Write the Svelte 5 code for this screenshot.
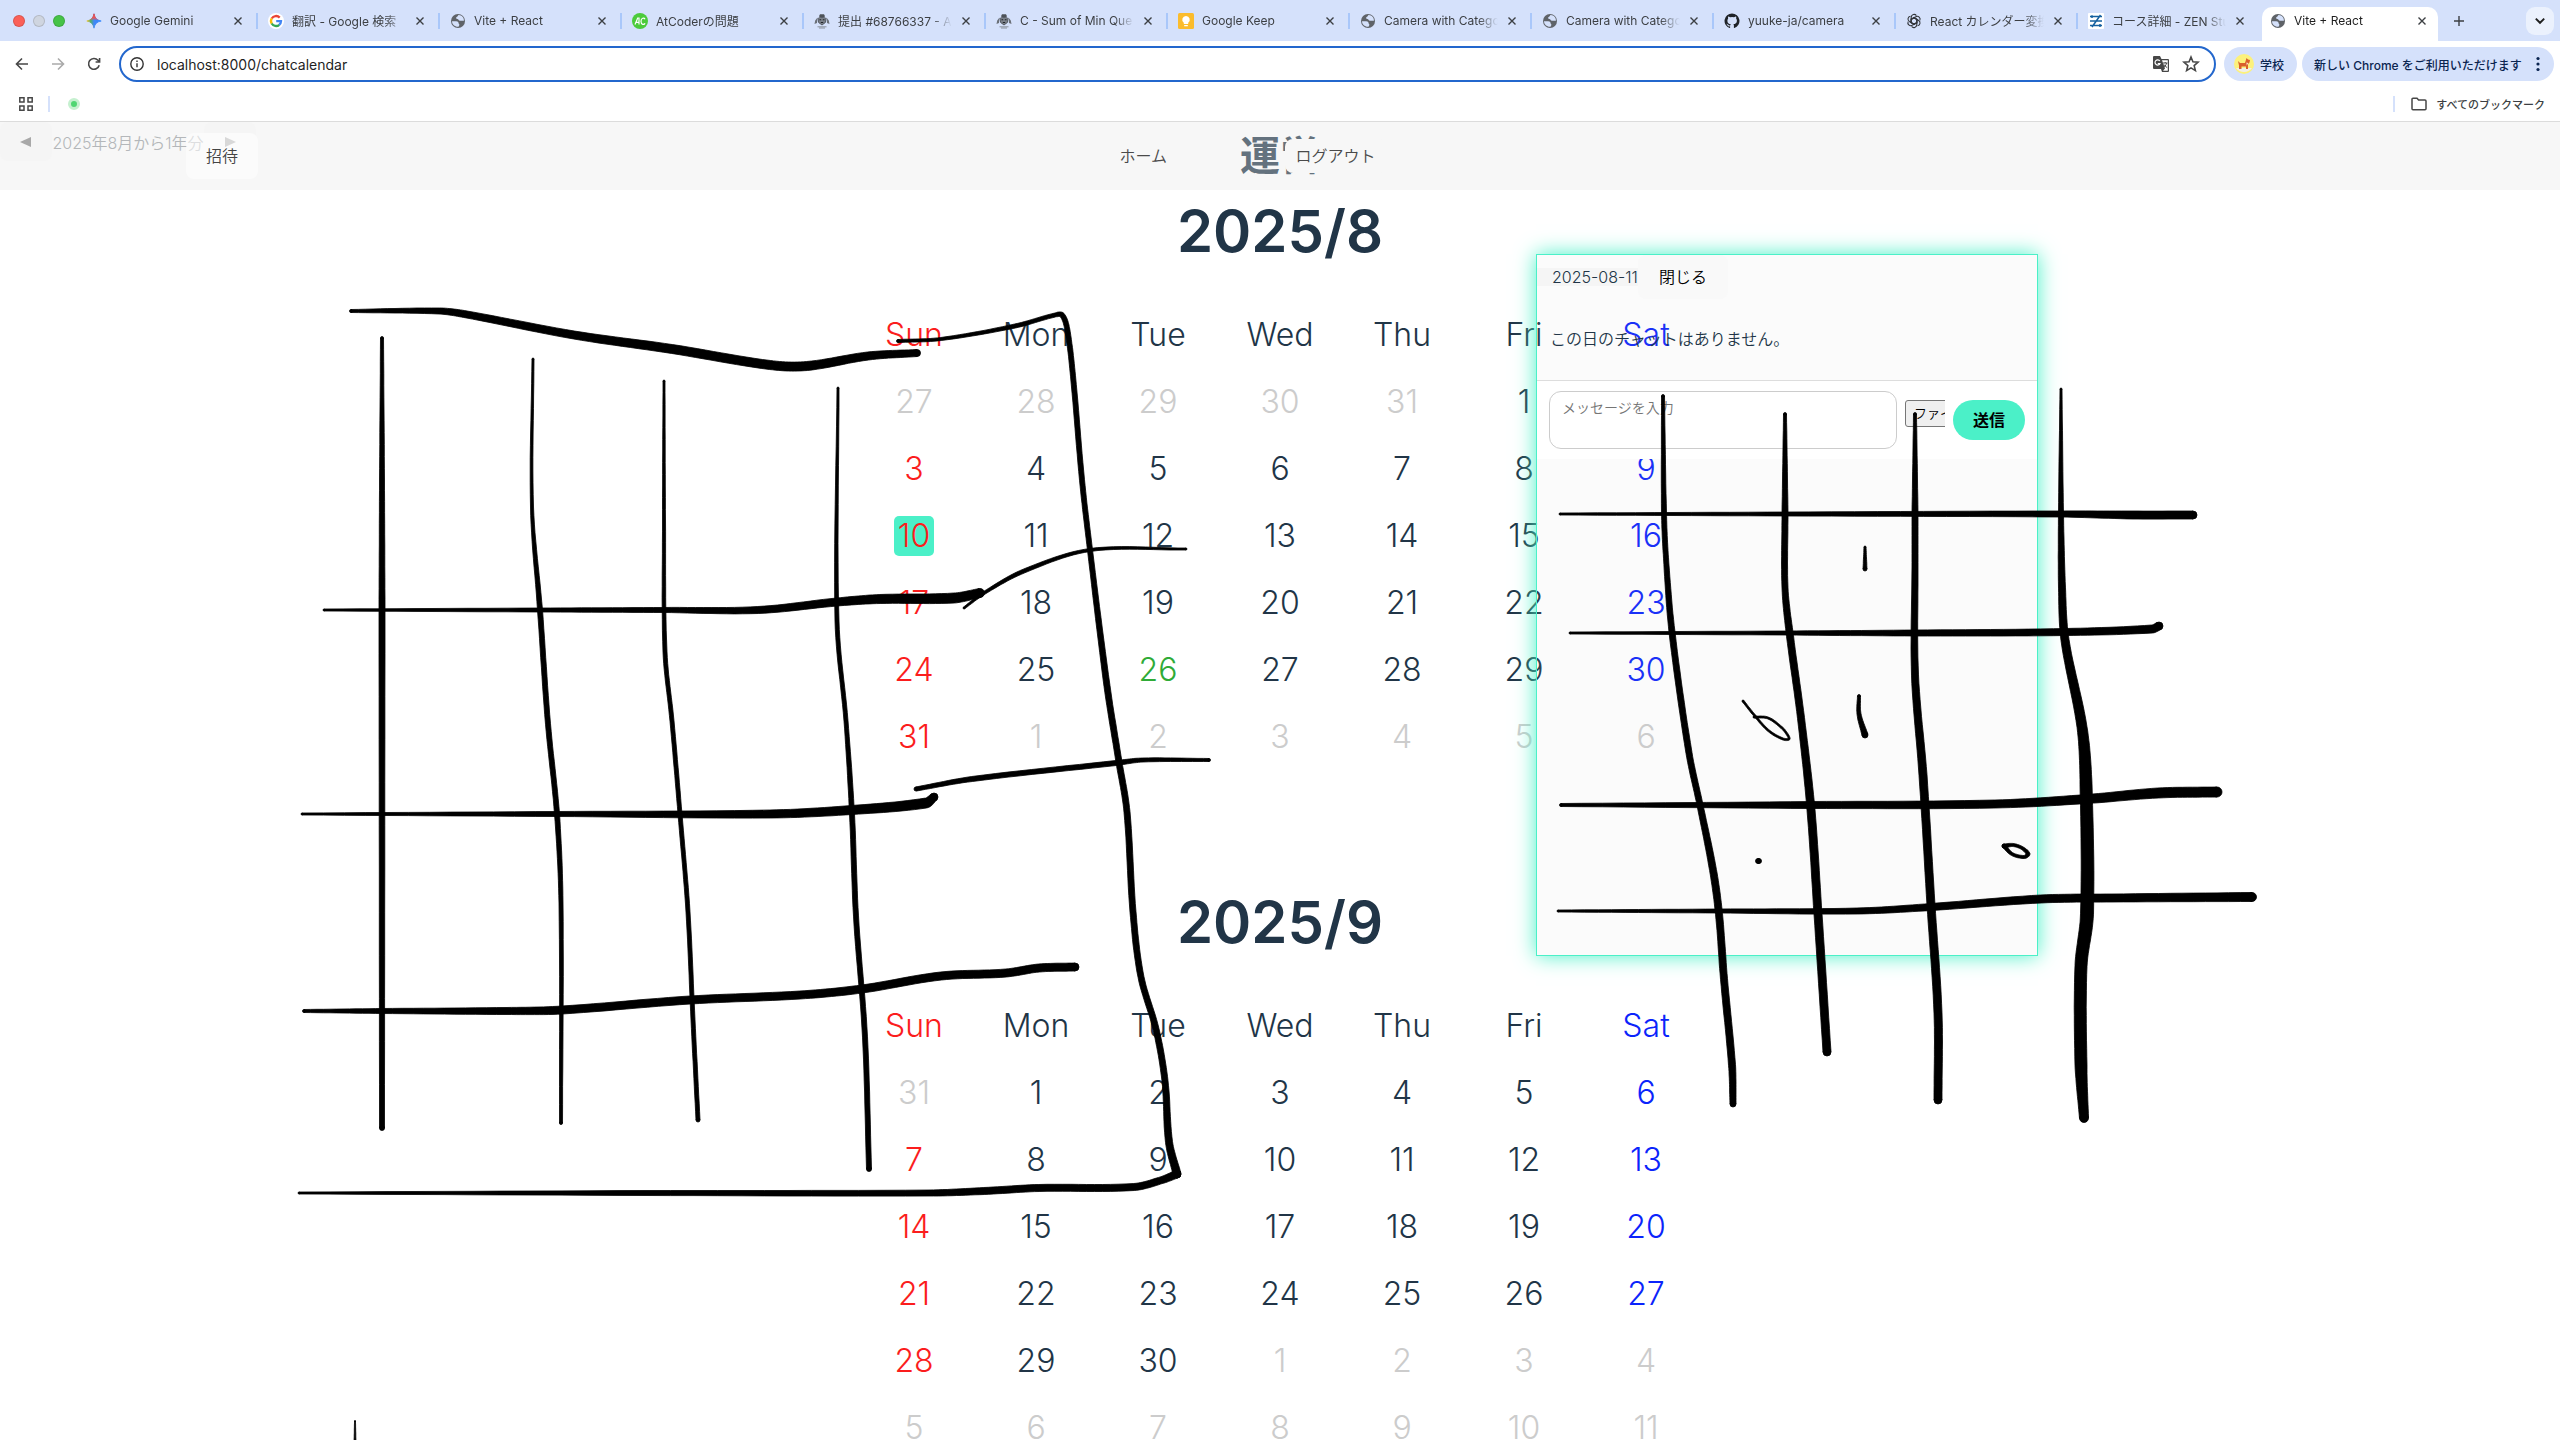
<script lang="ts">
  type Pt = [number, number, number];

  const tabs = [
    { icon: 'gemini', title: 'Google Gemini' },
    { icon: 'google', title: '翻訳 - Google 検索' },
    { icon: 'globe', title: 'Vite + React' },
    { icon: 'ac', title: 'AtCoderの問題' },
    { icon: 'atcoder', title: '提出 #68766337 - A' },
    { icon: 'atcoder', title: 'C - Sum of Min Que' },
    { icon: 'keep', title: 'Google Keep' },
    { icon: 'globe', title: 'Camera with Catego' },
    { icon: 'globe', title: 'Camera with Catego' },
    { icon: 'github', title: 'yuuke-ja/camera' },
    { icon: 'openai', title: 'React カレンダー変換' },
    { icon: 'zen', title: 'コース詳細 - ZEN Stu' },
    { icon: 'globe', title: 'Vite + React', active: true },
  ];

  const weekdays = ['Sun', 'Mon', 'Tue', 'Wed', 'Thu', 'Fri', 'Sat'];

  function build(first: number, prevLen: number, len: number) {
    const weeks = [];
    let day = 1 - first;
    for (let w = 0; w < 6; w++) {
      const week = [];
      for (let d = 0; d < 7; d++, day++) {
        const out = day < 1 || day > len;
        const n = day < 1 ? prevLen + day : day > len ? day - len : day;
        week.push({ n, out, dow: d });
      }
      weeks.push(week);
    }
    return weeks;
  }

  const months = [
    { name: '2025/8', weeks: build(5, 31, 31), today: 10, marked: 26 },
    { name: '2025/9', weeks: build(1, 31, 30), today: 0, marked: 0 },
  ];

  // Pen strokes: [x, y, pen width]
  const strokes: Pt[][] = [
    [[351,311,3],[439,311,6],[464,314,7],[574,335,8],[672,349,9],[770,365,9],[807,366,9],[868,356,8],[917,353,7]],
    [[898,341,3],[941,339,3],[1015,326,4],[1055,315,4],[1062,315,5],[1067,328,5],[1073,376,5],[1082,480,5],[1090,550,5],[1107,686,6],[1119,762,6],[1127,812,6],[1133,912,6],[1141,977,6],[1156,1029,6],[1165,1081,6],[1169,1142,7],[1177,1174,8]],
    [[1177,1174,8],[1162,1180,7],[1134,1187,7],[1039,1188,7],[984,1191,7],[929,1193,6],[647,1193,5],[299,1193,2]],
    [[324,610,2],[540,610,4],[664,610,5],[758,610,7],[837,602,8],[880,599,9],[954,598,10],[980,593,9]],
    [[964,608,2],[984,593,3],[1024,571,4],[1090,550,3],[1186,549,2]],
    [[916,789,4],[972,779,5],[1116,763,5],[1143,760,4],[1209,760,3]],
    [[302,814,2],[557,814,5],[770,814,8],[852,810,9],[926,803,10],[934,797,8]],
    [[304,1011,3],[382,1011,5],[507,1011,7],[562,1010,8],[690,1000,8],[800,995,8],[862,989,8],[941,976,8],[1006,973,8],[1039,968,8],[1075,967,8]],
    [[382,338,3],[382,480,5],[382,610,6],[382,1128,5]],
    [[533,359,2],[532,507,3],[540,610,5],[548,724,5],[557,814,5],[561,903,4],[561,1123,3]],
    [[664,381,2],[664,521,3],[665,652,4],[672,721,4],[680,814,4],[688,912,4],[693,1020,4],[698,1120,4]],
    [[838,388,2],[837,621,4],[846,721,4],[852,814,5],[856,916,5],[865,1037,5],[869,1169,5]],
    [[355,1421,1],[355,1445,2]],
    [[1663,396,3],[1664,513,5],[1666,558,5],[1672,632,6],[1689,753,6],[1700,805,6],[1713,870,7],[1719,914,7],[1724,979,7],[1732,1065,7],[1733,1104,6]],
    [[1785,414,3],[1785,513,6],[1785,588,6],[1790,636,7],[1801,718,7],[1811,810,8],[1818,914,8],[1827,1052,8]],
    [[1915,414,3],[1915,513,6],[1915,567,6],[1915,675,7],[1923,775,8],[1931,905,8],[1938,1013,8],[1938,1100,8]],
    [[2061,389,2],[2061,513,5],[2062,588,7],[2065,640,8],[2082,727,10],[2086,784,12],[2087,914,13],[2081,966,12],[2081,1065,12],[2084,1118,9]],
    [[1560,514,2],[1786,514,4],[2061,514,6],[2133,515,8],[2193,515,8]],
    [[1570,633,2],[1786,633,4],[1915,633,6],[2066,632,7],[2152,629,8],[2159,626,8]],
    [[1561,805,3],[1811,805,7],[1995,804,8],[2087,799,9],[2158,793,10],[2217,792,10]],
    [[1558,911,2],[1719,911,4],[1857,911,6],[1931,907,7],[2041,899,8],[2112,898,8],[2252,897,9]],
    [[1865,547,2],[1865,569,4]],
    [[1859,696,3],[1859,714,4],[1865,735,6]],
    [[1743,701,2],[1755,716,2],[1769,731,2],[1783,739,2],[1789,739,2],[1787,734,2],[1781,727,2],[1768,718,2],[1754,717,2]],
    [[1758,861,5],[1759,861,5]],
    [[2004,846,4],[2012,854,3],[2024,857,3],[2028,854,4],[2022,848,3],[2013,845,3],[2004,846,4]],
  ];

  // Smooths the centre line, then walks both edges to make a filled shape of varying width.
  function outline(pts: Pt[]): string {
    const line: Pt[] = [];
    for (let i = 0; i < pts.length - 1; i++) {
      const p1 = pts[i], p2 = pts[i + 1];
      const len = Math.hypot(p2[0] - p1[0], p2[1] - p1[1]) || 1;
      const tangent = (j: number) => {
        const a = pts[Math.max(j - 1, 0)], b = pts[Math.min(j + 1, pts.length - 1)];
        const c = pts[j];
        const d = Math.hypot(c[0] - a[0], c[1] - a[1]) + Math.hypot(b[0] - c[0], b[1] - c[1]) || 1;
        return [((b[0] - a[0]) / d) * len, ((b[1] - a[1]) / d) * len];
      };
      const m1 = tangent(i), m2 = tangent(i + 1);
      for (let s = 0; s < 12; s++) {
        const t = s / 12, t2 = t * t, t3 = t2 * t;
        const h1 = 2 * t3 - 3 * t2 + 1, h2 = t3 - 2 * t2 + t, h3 = -2 * t3 + 3 * t2, h4 = t3 - t2;
        line.push([
          h1 * p1[0] + h2 * m1[0] + h3 * p2[0] + h4 * m2[0],
          h1 * p1[1] + h2 * m1[1] + h3 * p2[1] + h4 * m2[1],
          p1[2] + (p2[2] - p1[2]) * t,
        ]);
      }
    }
    line.push(pts[pts.length - 1]);
    const left: string[] = [], right: string[] = [];
    line.forEach((p, i) => {
      const a = line[Math.max(i - 1, 0)], b = line[Math.min(i + 1, line.length - 1)];
      const d = Math.hypot(b[0] - a[0], b[1] - a[1]) || 1;
      const nx = (-(b[1] - a[1]) / d) * p[2] / 2, ny = ((b[0] - a[0]) / d) * p[2] / 2;
      left.push((p[0] + nx).toFixed(1) + ' ' + (p[1] + ny).toFixed(1));
      right.unshift((p[0] - nx).toFixed(1) + ' ' + (p[1] - ny).toFixed(1));
    });
    return 'M' + left.join('L') + 'L' + right.join('L') + 'Z';
  }
</script>

{#snippet icon(name: string)}
  <svg class="fav" viewBox="0 0 16 16" aria-hidden="true">
    {#if name === 'gemini'}
      <defs>
        <linearGradient id="gem" x1="0" y1="0" x2="1" y2="0">
          <stop offset="0" stop-color="#f6c12d" /><stop offset=".28" stop-color="#4fae6b" />
          <stop offset=".5" stop-color="#4187f5" /><stop offset="1" stop-color="#3186ff" />
        </linearGradient>
        <linearGradient id="gemtop" x1="0" y1="0" x2="0" y2="1">
          <stop offset="0" stop-color="#f2443e" /><stop offset=".28" stop-color="#e8575a" /><stop offset=".46" stop-color="#e8575a" stop-opacity="0" />
        </linearGradient>
      </defs>
      <path d="M8 .8C8.7 4.900 11.100 7.300 15.200 8C11.100 8.700 8.700 11.100 8 15.200C7.300 11.100 4.900 8.700 .8 8C4.900 7.300 7.300 4.900 8 .8Z" fill="url(#gem)" stroke="url(#gem)" stroke-width=".8" />
      <path d="M8 .8C8.7 4.900 11.100 7.300 15.200 8C11.100 8.700 8.700 11.100 8 15.200C7.300 11.100 4.900 8.700 .8 8C4.900 7.300 7.300 4.900 8 .8Z" fill="url(#gemtop)" stroke="url(#gemtop)" stroke-width=".8" />
    {:else if name === 'google'}
      <circle cx="8" cy="8" r="8" fill="#fff" />
      <g fill="none" stroke-width="2.300">
        <path d="M11.700 4.600A5 5 0 0 0 3.700 5.500" stroke="#ea4335" />
        <path d="M3.800 5.300A5 5 0 0 0 3.800 10.700" stroke="#fbbc05" />
        <path d="M3.700 10.500A5 5 0 0 0 11.300 11.800" stroke="#34a853" />
        <path d="M11.200 11.900A5 5 0 0 0 13 8.200H8.200" stroke="#4285f4" />
      </g>
    {:else if name === 'globe'}
      <circle cx="8" cy="8" r="7" fill="#5f6368" />
      <path d="M2 8.300H6.200C7.800 8.300 8.500 9 8.500 10.100C8.500 11.200 9.600 10.800 9.300 12.200L8.500 13.800C5 14.100 2 11.500 2 8.300ZM8.800 2.100C7.700 2.300 7.900 3.700 6.700 4C5.600 4.300 6 5.900 7.300 5.900C8.800 5.900 8.500 7.800 9.900 7.800H13.900C14.100 4.700 11.800 2.400 8.800 2.100Z" fill="#d5e1fb" />
    {:else if name === 'ac'}
      <circle cx="8" cy="8" r="8" fill="#4ccb3b" />
      <path d="M3 11.500L5.700 5H7V11.500M4.200 9.300H7M13 6.200C12.200 4.500 9 4.600 9 8.200C9 12 12.300 12 13 10.200" fill="none" stroke="#fff" stroke-width="1.200" />
    {:else if name === 'atcoder'}
      <path d="M5 3.200L6 1.300H10L11 3.200L10 4.200H6Z" fill="#4d5259" />
      <path d="M3.500 4.500L1.200 7.500L.5 11L3 10ZM12.500 4.500L14.800 7.500L15.500 11L13 10Z" fill="#6b7078" />
      <path d="M4 5.500C4.500 4 11.500 4 12 5.500L11.400 9.500L8 12L4.600 9.500Z" fill="#7c828b" stroke="#41464d" stroke-width=".8" />
      <path d="M5.500 6.800H7.200M8.800 6.800H10.500M6.800 9.500H9.200" stroke="#22262b" stroke-width="1.100" />
      <path d="M3.500 13.800H12.500M5 15H11" stroke="#858a93" stroke-width=".9" />
    {:else if name === 'keep'}
      <rect width="16" height="16" rx="1.500" fill="#fbbc2d" />
      <path d="M8 3A3.700 3.700 0 0 1 10.200 9.700V11H5.800V9.700A3.700 3.700 0 0 1 8 3ZM6.200 12H9.800V13.200H6.200Z" fill="#fff" />
    {:else if name === 'github'}
      <path d="M8 .5a7.500 7.500 0 0 0-2.400 14.600c.4.1.5-.2.500-.4v-1.400c-2.100.5-2.500-.9-2.500-.9-.3-.9-.8-1.100-.8-1.100-.7-.5.1-.5.100-.5.800.1 1.200.8 1.200.8.700 1.200 1.800.8 2.200.6.100-.5.300-.8.500-1-1.700-.2-3.400-.8-3.400-3.700 0-.8.3-1.500.8-2-.1-.2-.4-1 .1-2 0 0 .6-.2 2 .8a7 7 0 0 1 3.700 0c1.400-1 2-.8 2-.8.5 1 .2 1.800.1 2 .5.500.8 1.200.8 2 0 2.900-1.800 3.500-3.500 3.700.3.200.5.700.5 1.400v2.100c0 .2.200.5.500.4A7.500 7.500 0 0 0 8 .5Z" fill="#1f2328" />
    {:else if name === 'openai'}
      <g fill="none" stroke="#33363b" stroke-width="1.100">
        {#each [0, 60, 120, 180, 240, 300] as r}
          <path d="M5.200 9.700V4.200A2.900 2.900 0 0 1 10.400 2.600M5.200 6.300L8 4.700L11.500 6.700" transform="rotate({r} 8 8)" />
        {/each}
      </g>
    {:else if name === 'zen'}
      <rect width="16" height="16" rx="1" fill="#fff" />
      <path d="M2 3.500H14M2 8H14M2 12.500H14M12.500 2L4 14M4 2.200V5M12 11V14" stroke="#14609f" stroke-width="1.500" />
    {/if}
  </svg>
{/snippet}

<div class="window">
  <nav class="strip" aria-label="タブ">
    <div class="lights"><i class="red"></i><i class="gray"></i><i class="green"></i></div>
    {#each tabs as tab}
      <div class="tab" class:active={tab.active}>
        {@render icon(tab.icon)}
        <span class="title">{tab.title}</span>
        <button class="close" aria-label="タブを閉じる">
          <svg viewBox="0 0 10 10"><path d="M1.500 1.500L8.500 8.500M8.500 1.500L1.500 8.500" /></svg>
        </button>
      </div>
    {/each}
    <button class="plus" aria-label="新しいタブ">
      <svg viewBox="0 0 12 12"><path d="M6 1V11M1 6H11" /></svg>
    </button>
    <button class="search" aria-label="タブを検索">
      <svg viewBox="0 0 10 10"><path d="M1.500 3L5 6.500L8.500 3" /></svg>
    </button>
  </nav>

  <div class="chrome">
    <div class="toolbar">
      <button class="tool" aria-label="戻る"><svg viewBox="0 0 16 16"><path d="M14 8H2.500M8 2.500L2.500 8L8 13.500" /></svg></button>
      <button class="tool dim" aria-label="進む"><svg viewBox="0 0 16 16"><path d="M2 8H13.500M8 2.500L13.500 8L8 13.500" /></svg></button>
      <button class="tool" aria-label="再読み込み"><svg viewBox="0 0 16 16"><path d="M13.200 9.300A5.400 5.400 0 1 1 12 4.200L13.500 5.800M13.600 2V6H9.600" /></svg></button>
      <div class="omni">
        <svg class="info" viewBox="0 0 16 16"><circle cx="8" cy="8" r="6.200" /><path d="M8 7.300V11.300M8 4.600V6.100" /></svg>
        <input aria-label="アドレス" value="localhost:8000/chatcalendar" />
        <svg class="trans" viewBox="0 0 18 18">
          <path d="M2 1H8L9.500 4H16A1 1 0 0 1 17 5V16A1 1 0 0 1 16 17H10L9 14H2A1 1 0 0 1 1 13V2A1 1 0 0 1 2 1Z" fill="#474747" />
          <path d="M10 5.200H15.800V15.800H11L13 13.500L10 5.200Z" fill="#fff" />
          <path d="M7.800 6A2.600 2.600 0 1 0 8 8.500H5.800" fill="none" stroke="#fff" stroke-width="1.200" />
          <path d="M11 8H15.500M13.200 7V8M14.600 8C14 10.500 12.500 12 11.500 12.600M12 9.500C12.800 11 14 12 15.200 12.600" fill="none" stroke="#474747" />
        </svg>
        <svg class="star" viewBox="0 0 16 16"><path d="M8 1.800L9.700 6.100L14.300 6.400L10.800 9.400L11.900 13.900L8 11.400L4.100 13.900L5.200 9.400L1.700 6.400L6.300 6.100Z" /></svg>
      </div>
      <button class="chip profile">
        <svg viewBox="0 0 20 20"><circle cx="10" cy="10" r="10" fill="#fcf17c" /><path d="M2 14A10 10 0 0 0 18 14Z" fill="#f2efe6" /><path d="M4 7L6 9H11L12.500 4L14 5.500L16 6L15.500 8.500L14 10V15H12V12.500H7.500V15H5V11.500Z" fill="#d9602c" /><path d="M12.500 8.500L14 9L12.800 11.500Z" fill="#fff" /></svg>
        学校
      </button>
      <button class="chip update">
        新しい Chrome をご利用いただけます
        <svg viewBox="0 0 4 16"><circle cx="2" cy="2.500" r="1.600" /><circle cx="2" cy="8" r="1.600" /><circle cx="2" cy="13.500" r="1.600" /></svg>
      </button>
    </div>
    <div class="bookmarks">
      <svg class="grid" viewBox="0 0 14 14"><path d="M.8 .8H5V5H.8ZM9 .8H13.200V5H9ZM.8 9H5V13.200H.8ZM9 9H13.200V13.200H9Z" /></svg>
      <span class="rule"></span>
      <i class="dot"></i>
      <span class="rule last"></span>
      <button class="all">
        <svg viewBox="0 0 16 14"><path d="M1 2.200A1 1 0 0 1 2 1.200H6L7.600 3H14A1 1 0 0 1 15 4V11.800A1 1 0 0 1 14 12.800H2A1 1 0 0 1 1 11.800Z" /></svg>
        すべてのブックマーク
      </button>
    </div>
  </div>

  <div class="page">
    <header>
      <div class="range">
        <button aria-label="前へ"><svg viewBox="0 0 12 12"><path d="M11 1V11L0 6Z" /></svg></button>
        <span>2025年8月から1年分</span>
        <button aria-label="次へ"><svg viewBox="0 0 12 12"><path d="M1 1V11L12 6Z" /></svg></button>
      </div>
      <h1>運営</h1>
      <button class="invite">招待</button>
      <a class="home" href="#home">ホーム</a>
      <button class="logout">ログアウト</button>
    </header>

    <main>
      {#each months as m}
        <section>
          <h2>{m.name}</h2>
          <table>
            <thead>
              <tr>{#each weekdays as d, i}<th class:sun={i === 0} class:sat={i === 6}>{d}</th>{/each}</tr>
            </thead>
            <tbody>
              {#each m.weeks as week}
                <tr>
                  {#each week as c}
                    <td class:sun={c.dow === 0} class:sat={c.dow === 6} class:out={c.out} class:marked={!c.out && c.n === m.marked}>
                      <span class:today={!c.out && c.n === m.today}>{c.n}</span>
                    </td>
                  {/each}
                </tr>
              {/each}
            </tbody>
          </table>
        </section>
      {/each}
    </main>

    <aside class="chat">
      <div class="head"><span class="date">2025-08-11</span><button>閉じる</button></div>
      <p>この日のチャットはありません。</p>
      <form>
        <textarea aria-label="メッセージ" placeholder="メッセージを入力"></textarea>
        <div class="file"><label for="file">ファイルを選択</label><input id="file" type="file" /></div>
        <button type="button">送信</button>
      </form>
    </aside>
  </div>

  <svg class="ink" viewBox="0 0 2560 1440" aria-hidden="true">
    {#each strokes as s}
      <path d={outline(s)} />
      <circle cx={s[0][0]} cy={s[0][1]} r={s[0][2] / 2} />
      <circle cx={s[s.length - 1][0]} cy={s[s.length - 1][1]} r={s[s.length - 1][2] / 2} />
    {/each}
  </svg>
</div>

<style>
  :global(body) { background: #fff; }
  * { box-sizing: border-box; }
  button { font: inherit; color: inherit; border: 0; background: none; padding: 0; }
  svg { display: block; flex: none; }
  .window {
    position: relative; display: flex; flex-direction: column; height: 100vh; overflow: hidden;
    font-family: Inter, 'Noto Sans CJK JP', sans-serif; color: #213547;
  }

  .strip { display: flex; align-items: center; height: 41px; background: #d5e1fb; padding-right: 6px; flex: none; font-size: 12px; color: #3c3f43; font-weight: 400; }
  .lights { display: flex; gap: 8px; width: 75px; padding-left: 13px; flex: none; }
  .lights i { width: 12px; height: 12px; border-radius: 50%; border: 1px solid #0002; }
  .red { background: #fb6058; } .gray { background: #cfd5e0; } .green { background: #46c347; }
  .tab { position: relative; display: flex; align-items: center; flex: 0 1 182px; min-width: 0; height: 41px; padding: 0 12px 0 11px; }
  .tab::after { content: ''; position: absolute; right: -1px; width: 2px; height: 16px; background: #a9c7fa; }
  .tab.active::after, .tab:has(+ .active)::after { display: none; }
  .fav { width: 16px; height: 16px; }
  .title { flex: 1; min-width: 0; margin: 0 7px 0 8px; overflow: hidden; white-space: nowrap; mask-image: linear-gradient(90deg, #000 calc(100% - 20px), transparent); }
  .close svg { width: 14px; height: 10px; }
  .close svg path, .plus path, .search path { fill: none; stroke: #3c3f43; stroke-width: 1.4; }
  .active { color: #1f1f1f; }
  .active::before { content: ''; position: absolute; z-index: 0; inset: 7px 3px 0 3px; background: #fff; border-radius: 10px 10px 0 0; }
  .active > :global(*) { position: relative; }
  .plus { width: 36px; display: flex; justify-content: center; }
  .plus svg { width: 12px; height: 12px; }
  .search { margin-left: auto; width: 28px; height: 28px; border-radius: 9px; background: #ebf1fd; display: flex; align-items: center; justify-content: center; }
  .search svg { width: 12px; height: 12px; }
  .search path { stroke: #1f1f1f; stroke-width: 1.6; }

  .chrome { background: #fff; border-bottom: 1px solid #dcdcdc; flex: none; }
  .toolbar { display: flex; align-items: center; padding: 5px 6px 0 4px; height: 41px; }
  .tool { width: 36px; display: flex; justify-content: center; }
  .tool svg { width: 16px; height: 16px; fill: none; stroke: #474747; stroke-width: 1.6; }
  .tool.dim svg { stroke: #aaa; }
  .omni { flex: 1; display: flex; align-items: center; gap: 12px; height: 36px; margin: 0 8px 0 7px; padding: 0 14px 0 8px; border: 2px solid #2367cd; border-radius: 18px; }
  .omni input { flex: 1; min-width: 0; border: 0; outline: 0; padding: 0; font: 14px Inter, sans-serif; color: #1f1f1f; background: none; }
  .info { width: 16px; height: 16px; fill: none; stroke: #333; stroke-width: 1.4; }
  .star { width: 18px; height: 18px; fill: none; stroke: #474747; stroke-width: 1.4; }
  .trans { width: 18px; height: 18px; }
  .chip { display: flex; align-items: center; height: 34px; border-radius: 17px; background: #d5e1fb; font-size: 12px; font-weight: 500; color: #0b2550; white-space: nowrap; }
  .profile { width: 73px; gap: 6px; padding-left: 10px; margin-right: 5px; }
  .profile svg { width: 20px; height: 20px; }
  .update { width: 252px; padding: 0 14px 0 12px; justify-content: space-between; }
  .update svg { width: 4px; height: 16px; fill: #0b2550; }
  .bookmarks { display: flex; align-items: center; height: 39px; padding: 5px 15px 0 19px; }
  .grid { width: 14px; height: 14px; fill: none; stroke: #474747; stroke-width: 1.5; }
  .rule { width: 2px; height: 16px; background: #d5e1fb; margin: 0 18px 0 15px; }
  .dot { width: 12px; height: 12px; border-radius: 50%; background: #4fd672; border: 3px solid #c5f0cf; }
  .rule.last { margin: 0 16px 0 auto; }
  .all { display: flex; align-items: center; gap: 9px; font-size: 11px; font-weight: 500; color: #3c3f43; }
  .all svg { width: 16px; height: 14px; fill: none; stroke: #474747; stroke-width: 1.5; }

  .page { position: relative; flex: 1; min-height: 0; }
  header { position: relative; display: flex; align-items: center; justify-content: center; height: 68px; background: #f7f7f7; font-size: 16px; font-weight: 350; color: #4a4a4a; }
  h1 { margin: 0; font-size: 40px; font-weight: 700; line-height: 68px; color: #64727e; }
  .range { position: absolute; left: 0; top: 0; display: flex; align-items: center; height: 39px; color: #b4b7ba; font-family: Inter, 'Noto Sans CJK JP', sans-serif; }
  .range button { width: 52px; height: 39px; border-radius: 8px; background: #f5f5f5; display: flex; align-items: center; justify-content: center; }
  .range span { width: 152px; display: flex; justify-content: center; white-space: nowrap; }
  .range svg { width: 12px; height: 12px; fill: #a8a8a8; }
  .invite { position: absolute; left: 186px; top: 11px; width: 72px; height: 46px; padding-bottom: 2px; border-radius: 8px; background: #ffffff8c; color: #444; }
  .home, .logout { position: absolute; color: #4a4a4a; text-decoration: none; }
  .home { right: calc(50% + 113px); padding-bottom: 2px; }
  .logout { left: calc(50% + 5px); width: 101px; height: 34px; padding-bottom: 2px; border-radius: 8px; background: #f7f7f7; }

  main { height: 100%; overflow: hidden; }
  section { padding-bottom: 111px; }
  h2 { margin: 0 0 29px; text-align: center; font-size: 58px; font-weight: 600; line-height: 82px; }
  table { margin: 0 auto; border-collapse: collapse; table-layout: fixed; width: 854px; font-size: 32px; font-weight: 300; }
  th, td { padding: 0; height: 67px; text-align: center; font-weight: inherit; }
  td span { display: inline-block; min-width: 40px; line-height: 40px; border-radius: 5px; }
  .sun { color: #fb1d1d; }
  .sat { color: #0b24fb; }
  .out { color: #ccc; }
  .marked { color: #2fab37; }
  .today { background: #4bf0c8; }

  .chat { position: absolute; left: 60%; top: 132px; width: 502px; height: 702px; border: 1px solid #4bf0c8; background: rgba(205, 205, 205, .08); box-shadow: 0 0 20px #4bf0c8; font-size: 16px; font-weight: 350; }
  .head { display: flex; align-items: center; height: 44px; }
  .date { width: 101px; padding-left: 15px; line-height: 18px; background: #f5f5f5; font-weight: 300; white-space: nowrap; }
  .head button { width: 90px; height: 44px; padding-bottom: 2px; border-radius: 8px; background: #f9f9f9; color: #000; }
  .chat p { margin: 0; padding: 28px 13px 0; height: 81px; line-height: 24px; }
  form { display: flex; align-items: center; height: 79px; padding: 0 12px; border-top: 1px solid #ddd; background: #fff; }
  textarea { flex: 1; min-width: 0; height: 58px; border: 1px solid #ccc; border-radius: 12px; padding: 5px 12px; resize: none; background: none; font: 350 14px 'Noto Sans CJK JP', sans-serif; }
  textarea::placeholder { color: #757575; }
  .file { align-self: flex-start; width: 40px; margin: 19px 8px 0; overflow: hidden; }
  .file label { display: block; width: 110px; height: 27px; line-height: 25px; padding-left: 8px; border: 1px solid #767676; border-radius: 3px; background: #efefef; color: #000; font-size: 13px; }
  .file input { display: none; }
  form button { width: 72px; height: 40px; padding-bottom: 2px; border-radius: 20px; background: #4bf0c8; color: #000; font-weight: 700; }

  .ink { position: absolute; left: 0; top: 0; width: 100%; pointer-events: none; stroke: #000; stroke-width: .8; }
</style>
